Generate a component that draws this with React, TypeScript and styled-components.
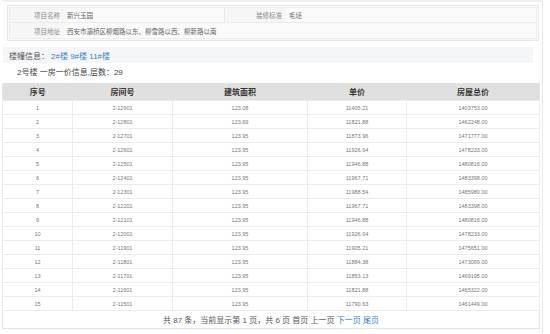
import React from "react";
import styled, { createGlobalStyle } from "styled-components";

const rows = [
  ["1", "2-12901", "123.08", "11405.21", "1403753.00"],
  ["2", "2-12801", "123.69", "11821.88", "1462248.00"],
  ["3", "2-12701", "123.95", "11873.96", "1471777.00"],
  ["4", "2-12601", "123.95", "11926.04", "1478233.00"],
  ["5", "2-12501", "123.95", "11946.88", "1480816.00"],
  ["6", "2-12401", "123.95", "11967.71", "1483398.00"],
  ["7", "2-12301", "123.95", "11988.54", "1485980.00"],
  ["8", "2-12201", "123.95", "11967.71", "1483398.00"],
  ["9", "2-12101", "123.95", "11946.88", "1480816.00"],
  ["10", "2-12001", "123.95", "11926.04", "1478233.00"],
  ["11", "2-11901", "123.95", "11905.21", "1475651.00"],
  ["12", "2-11801", "123.95", "11884.38", "1473069.00"],
  ["13", "2-11701", "123.95", "11853.13", "1469195.00"],
  ["14", "2-11601", "123.95", "11821.88", "1465322.00"],
  ["15", "2-11501", "123.95", "11790.63", "1461449.00"],
];

const headers = ["序号", "房间号", "建筑面积", "单价", "房屋总价"];
const widths = [70, 100, 135, 99, 133];

const App = () => {
  return (
    <>
      <GlobalStyle />
      <Page>
        <InfoBox>
          <InfoGrid>
            <Label>项目名称</Label>
            <Value>新兴玉园</Value>
            <Label $divided>装修标准</Label>
            <Value>毛坯</Value>
            <Label $last>项目地址</Label>
            <Value $wide $last>
              西安市灞桥区柳烟路以东、柳雪路以西、柳新路以南
            </Value>
          </InfoGrid>
        </InfoBox>
        <BuildingBar>
          楼幢信息：
          <Links>
            <a>2#楼</a> <a>9#楼</a> <a>11#楼</a>
          </Links>
        </BuildingBar>
        <Title>2号楼 一房一价信息,层数：29</Title>
        <Table>
          <colgroup>
            {widths.map((w, i) => (
              <col key={i} style={{ width: w }} />
            ))}
          </colgroup>
          <thead>
            <tr>
              {headers.map((h) => (
                <Th key={h}>{h}</Th>
              ))}
            </tr>
          </thead>
          <tbody>
            {rows.map((r) => (
              <tr key={r[0]}>
                {r.map((c, i) => (
                  <Td key={i}>{c}</Td>
                ))}
              </tr>
            ))}
            <tr>
              <Footer colSpan={5}>
                共 87 条，当前显示第 1 页，共 6 页 首页 上一页 <PageLink>下一页</PageLink>{" "}
                <PageLink>尾页</PageLink>
              </Footer>
            </tr>
          </tbody>
        </Table>
      </Page>
    </>
  );
};

export default App;

const GlobalStyle = createGlobalStyle`
  body {
    margin: 0;
    background: #ffffff;
    font-family: "Liberation Sans", "Noto Sans CJK SC", sans-serif;
  }
`;

const Page = styled.div`
  box-sizing: border-box;
  width: 541px;
  height: 334px;
  margin-left: 2px;
  padding-top: 3px;
  border-top: 2px solid #f0f0f0;
  border-right: 1px solid #e6e6e6;
`;

const InfoBox = styled.div`
  box-sizing: border-box;
  margin: 0 3px 0 5px;
  padding: 1px;
  border: 1px solid #e8e8e8;
  background: #fafafa;
`;

const InfoGrid = styled.div`
  display: grid;
  grid-template-columns: 54px 160px 62px 1fr;
  grid-auto-rows: 15px;
  border: 1px solid #ededed;
`;

const Label = styled.div<{ $divided?: boolean; $last?: boolean }>`
  display: flex;
  align-items: center;
  justify-content: flex-end;
  padding-right: 4px;
  font-size: 6.5px;
  color: #8c8c8c;
  background: #f6f6f6;
  border-bottom: ${(p) => (p.$last ? "none" : "1px solid #ececec")};
  border-left: ${(p) => (p.$divided ? "1px solid #e8e8e8" : "none")};
`;

const Value = styled.div<{ $wide?: boolean; $last?: boolean }>`
  display: flex;
  align-items: center;
  padding-left: 3px;
  font-size: 6.5px;
  color: #666;
  grid-column: ${(p) => (p.$wide ? "2 / 5" : "auto")};
  border-bottom: ${(p) => (p.$last ? "none" : "1px solid #ececec")};
`;

const BuildingBar = styled.div`
  display: flex;
  align-items: center;
  height: 16px;
  margin: 6px 9px 0 1px;
  padding-left: 6px;
  background: #f5f6f8;
  font-size: 8px;
  color: #555;
`;

const Links = styled.span`
  margin-left: 2px;
  color: #3d7fc6;
  white-space: pre;
`;

const Title = styled.div`
  height: 20px;
  line-height: 20px;
  padding-left: 15px;
  font-size: 8px;
  color: #444;
`;

const Table = styled.table`
  width: 537px;
  border-collapse: collapse;
  table-layout: fixed;
  border-left: 1px solid #e4e4e4;
`;

const Th = styled.th`
  height: 17px;
  padding: 0;
  background: #e0e0e0;
  font-size: 8px;
  font-weight: bold;
  color: #333;
  text-align: center;
`;

const Td = styled.td`
  height: 13px;
  padding: 0;
  border: 1px solid #ececec;
  font-size: 5.5px;
  color: #777;
  text-align: center;
`;

const Footer = styled.td`
  height: 17px;
  padding: 0;
  border: 1px solid #e4e4e4;
  font-size: 8px;
  color: #555;
  text-align: center;
`;

const PageLink = styled.a`
  color: #3d7fc6;
`;
